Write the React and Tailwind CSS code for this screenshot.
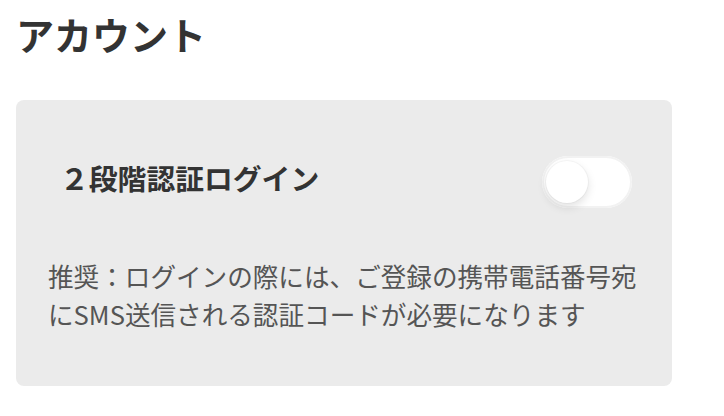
import React, { useState } from 'react';

const font = { fontFamily: '"Noto Sans CJK JP", "Noto Sans", sans-serif' };

const Toggle = ({ on, onChange }) => (
  <button
    type="button"
    onClick={() => onChange(!on)}
    className={`relative h-[52px] w-[90px] shrink-0 rounded-full transition ${on ? 'bg-[#34c759]' : 'bg-white'} shadow-[inset_0_0_0_2px_#f2f2f2]`}
  >
    <span
      className={`absolute top-[5px] h-[42px] w-[42px] rounded-full bg-white shadow-[0_4px_10px_rgba(0,0,0,0.12),0_0_0_1px_rgba(0,0,0,0.03)] transition-all ${on ? 'left-[44px]' : 'left-[4px]'}`}
    />
  </button>
);

const App = () => {
  const [twoFactor, setTwoFactor] = useState(false);

  return (
    <div className="min-h-screen bg-white px-4 pt-[6px]" style={font}>
      <h1 className="text-[38px] font-bold leading-[56px] text-[#333]">アカウント</h1>

      <div className="mt-[38px] w-[656px] rounded-lg bg-[#ebebeb] px-8 pt-[56px] pb-[53px]">
        {/* 2FA row */}
        <div className="flex items-start justify-between pl-3 pr-2">
          <h2 className="pt-[2px] text-[28.8px] font-bold leading-[40px] text-[#333]">２段階認証ログイン</h2>
          <Toggle on={twoFactor} onChange={setTwoFactor} />
        </div>
        <p className="mt-[49px] text-[25.6px] leading-[38px] text-[#555]">
          推奨：ログインの際には、ご登録の携帯電話番号宛にSMS送信される認証コードが必要になります
        </p>
      </div>
    </div>
  );
};

export default App;
